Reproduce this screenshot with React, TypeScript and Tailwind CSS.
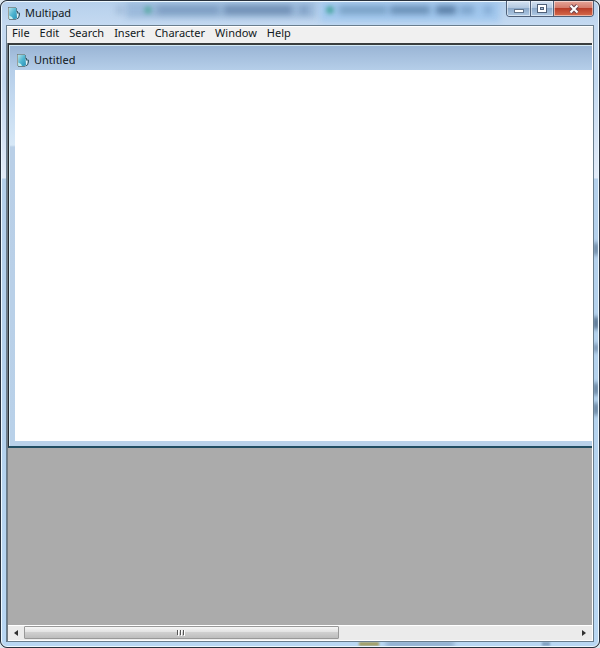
import type { ReactNode } from "react";

const menus: { label: string }[] = [
  { label: "File" },
  { label: "Edit" },
  { label: "Search" },
  { label: "Insert" },
  { label: "Character" },
  { label: "Window" },
  { label: "Help" },
];

function NotepadIcon() {
  return (
    <svg width="14" height="14" viewBox="0 0 14 14" className="shrink-0" aria-hidden="true">
      <defs>
        <linearGradient id="notepad-page" x1="0" y1="0" x2="1" y2="1">
          <stop offset="0" stopColor="#b4e2ea" />
          <stop offset=".5" stopColor="#4fb5d0" />
          <stop offset="1" stopColor="#2a93b8" />
        </linearGradient>
      </defs>
      <path d="M1 1h8l1.5 5 2 2-1 4-3 1.500H2Z" fill="#a9c6d2" />
      <path d="M2 2h7l1 10-2 1H2.500Z" fill="url(#notepad-page)" />
      <path d="M2 9.500 5 11l1 2H2.500Z" fill="#c7f0f2" />
      <path d="M1.500 13 1.500 1" stroke="#98a09a" />
      <path d="M1.500 1.500h8" stroke="#59645f" strokeDasharray="1 1" />
      <path d="M2 13.500h7" stroke="#6d7f86" />
      <path d="M9.500 2v4" stroke="#5b8797" />
      <path d="M10.500 5v2h2v2l-1 3-2 1" fill="none" stroke="#3c5c69" />
      <path d="M10.500 8v3.500" stroke="#e4f3f6" />
    </svg>
  );
}

function CaptionButton({ label, className, children }: { label: string; className: string; children: ReactNode }) {
  return (
    <button
      type="button"
      aria-label={label}
      className={`flex items-center justify-center border-[#4f6079] shadow-[inset_0_0_0_1px_rgba(255,255,255,0.5)] ${className}`}
    >
      {children}
    </button>
  );
}

function GlassReflections() {
  return (
    <div className="pointer-events-none absolute inset-0 overflow-hidden" aria-hidden="true">
      <div className="absolute left-[124px] top-0 h-4 w-[190px] bg-[#86a9cf]/60 blur-[3px]" />
      <div className="absolute left-[318px] top-0 h-5 w-[180px] bg-[#8fc0ee]/60 blur-[3px]" />
      <div className="absolute left-[114px] top-1 h-2 w-2 bg-[#7897b8]/40 blur-[3px]" />
      <div className="absolute left-[142px] top-1 h-2 w-2 rounded-full bg-[#4fa89b]/70 blur-[2px]" />
      <div className="absolute left-[155px] top-1 h-2 w-[62px] bg-[#4e719b]/40 blur-[3px]" />
      <div className="absolute left-[222px] top-1 h-2 w-[68px] bg-[#3f6089]/50 blur-[3px]" />
      <div className="absolute left-[298px] top-1 h-2 w-2 bg-[#4e719b]/40 blur-[3px]" />
      <div className="absolute left-[324px] top-1 h-2 w-2 rounded-full bg-[#319c8a]/70 blur-[2px]" />
      <div className="absolute left-[337px] top-1 h-2 w-[48px] bg-[#507799]/50 blur-[3px]" />
      <div className="absolute left-[388px] top-1 h-2 w-[40px] bg-[#41658c]/60 blur-[3px]" />
      <div className="absolute left-[434px] top-1 h-2 w-[20px] bg-[#365a82]/70 blur-[3px]" />
      <div className="absolute left-[458px] top-1 h-2 w-[14px] bg-[#557ba5]/50 blur-[3px]" />
      <div className="absolute left-[482px] top-1 h-2 w-2 bg-[#557ba5]/40 blur-[3px]" />
      <div className="absolute right-0 top-[241px] h-3 w-1 bg-[#536f8c] blur-[2px]" />
      <div className="absolute right-0 top-[315px] h-3 w-1 bg-[#344f6b] blur-[2px]" />
      <div className="absolute right-0 top-[342px] h-2 w-1 bg-[#627d9a] blur-[2px]" />
      <div className="absolute right-0 top-[381px] h-3 w-1 bg-[#4b6683] blur-[2px]" />
      <div className="absolute right-0 top-[401px] h-3 w-1 bg-[#4b6683] blur-[2px]" />
      <div className="absolute bottom-0 left-[357px] h-1 w-5 bg-[#a19c62] blur-[1px]" />
      <div className="absolute bottom-0 left-[384px] h-1 w-[68px] bg-[#809fc0] blur-[2px]" />
      <div className="absolute bottom-0 left-[540px] h-1 w-2 bg-[#809fc0] blur-[1px]" />
    </div>
  );
}

export default function App() {
  return (
    <div className="flex h-screen min-h-[540px] bg-[#dce6ee] font-['Noto_Sans','Open_Sans',sans-serif] text-[11px] leading-4 text-[#111820]">
      <div className="flex min-w-0 flex-1 rounded-[7px] border border-[#28313d] bg-[#28313d]">
        <main className="relative flex min-w-0 flex-1 flex-col rounded-md border border-[#edf8ff] bg-[linear-gradient(to_bottom,#b6d0ec_0px,#c5daf1_24px,#c3d9f0_80px,#e2ebf8_176px,#b4d0eb_177px,#b4d2ed_400px,#b9d7f3_100%)] px-1 pb-1">
          <GlassReflections />
          <header className="relative flex h-[23px] shrink-0 items-start">
            <div className="flex items-center gap-1 pl-px pt-[3px]">
              <NotepadIcon />
              <h1>Multipad</h1>
            </div>
            <div className="-mt-px ml-auto flex h-4 overflow-hidden rounded-b border border-t-0 border-[#4f6079]">
              <CaptionButton label="Minimize" className="w-6 border-r bg-[linear-gradient(#d5e3f2_0%,#b2c7df_45%,#8ca9c9_50%,#b0cae5_100%)]">
                <svg width="12" height="10" viewBox="0 0 12 10" aria-hidden="true">
                  <rect x="1.5" y="5.5" width="9" height="3" fill="#fff" stroke="#63748a" />
                </svg>
              </CaptionButton>
              <CaptionButton label="Restore" className="w-[23px] border-r bg-[linear-gradient(#d5e3f2_0%,#b2c7df_45%,#8ca9c9_50%,#b0cae5_100%)]">
                <svg width="12" height="10" viewBox="0 0 12 10" aria-hidden="true">
                  <rect x="1.5" y=".5" width="9" height="8" fill="#fff" stroke="#4f6078" />
                  <rect x="4.5" y="3.5" width="3" height="2" fill="#a9bdd5" stroke="#4f6078" />
                </svg>
              </CaptionButton>
              <CaptionButton label="Close" className="w-[39px] bg-[linear-gradient(#e6a69a_0%,#d47c6c_45%,#b93e29_50%,#d66b4c_100%)]">
                <svg width="12" height="10" viewBox="0 0 12 10" aria-hidden="true">
                  <path d="m2.5 1.5 7 7m0-7-7 7" stroke="#704650" strokeWidth="4" />
                  <path d="m2.5 1.5 7 7m0-7-7 7" stroke="#fff" strokeWidth="2" />
                </svg>
              </CaptionButton>
            </div>
          </header>

          <div className="relative flex min-h-0 flex-1 flex-col border border-[#697d8d] bg-[#f0f0f0]">
            <nav aria-label="Main menu" className="flex h-[17px] shrink-0 items-center gap-[10px] border-t border-white pb-1 pl-[5px]">
              {menus.map((menu) => (
                <button key={menu.label} type="button">{menu.label}</button>
              ))}
            </nav>
            <div className="flex min-h-0 flex-1 flex-col border-l border-r border-l-[#727b82] border-r-white bg-[#ababab]">
              <section aria-label="Untitled" className="shrink-0 border-b-2 border-l border-t-2 border-b-[#214d61] border-l-[#252b30] border-t-[#393d3d]">
                <div className="border-l border-t border-[#d4eaf5] bg-[linear-gradient(#9ab5d5_0px,#b5cee9_24px,#c2d8ef_50px,#d7e8f7_99px,#b9cfe7_101px,#b9d1e9_100%)] pb-[5px] pl-[5px]">
                  <header className="flex h-6 items-center gap-1 pl-px pt-1">
                    <NotepadIcon />
                    <h2>Untitled</h2>
                  </header>
                  <textarea
                    aria-label="Document text"
                    className="block h-[371px] w-full resize-none bg-white p-1 outline-none"
                  />
                </div>
              </section>
              <div className="flex-1" />
              <div className="flex h-4 shrink-0 border-b border-t border-white bg-[#ebebeb]">
                <button type="button" aria-label="Scroll left" className="flex w-4 items-center justify-center">
                  <svg width="4" height="6" viewBox="0 0 4 6" aria-hidden="true"><path d="M4 0v6L0 3Z" fill="#303030" /></svg>
                </button>
                <div className="flex-1">
                  <button
                    type="button"
                    aria-label="Horizontal scroll thumb"
                    className="flex h-[13px] w-[57%] items-center justify-center rounded-[1px] border border-[#999] bg-[linear-gradient(#f5f5f5_0%,#e2e2e2_45%,#cfcfcf_50%,#bdbdbd_100%)]"
                  >
                    <svg width="8" height="6" viewBox="0 0 8 6" aria-hidden="true">
                      <path d="M1.5 0v6m3-6v6m3-6v6" stroke="#fff" />
                      <path d="M.5 0v5m3-5v5m3-5v5" stroke="#555" />
                    </svg>
                  </button>
                </div>
                <button type="button" aria-label="Scroll right" className="flex w-4 items-center justify-center">
                  <svg width="4" height="6" viewBox="0 0 4 6" aria-hidden="true"><path d="M0 0v6l4-3Z" fill="#303030" /></svg>
                </button>
              </div>
            </div>
          </div>
        </main>
      </div>
    </div>
  );
}
